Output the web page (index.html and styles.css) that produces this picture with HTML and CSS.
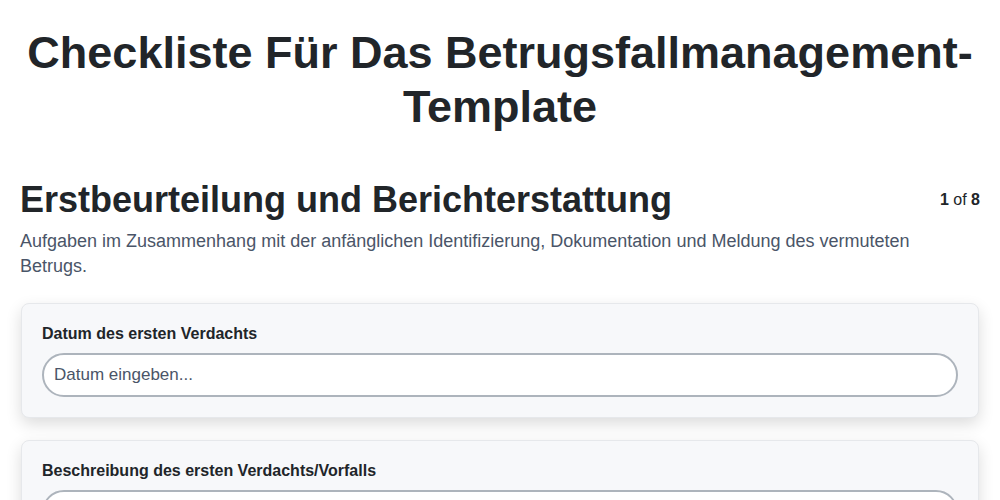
FILE: index.html
```html
<!DOCTYPE html>
<html lang="de">
<head>
<meta charset="utf-8">
<title>Checkliste Für Das Betrugsfallmanagement-Template</title>
<link rel="stylesheet" href="styles.css">
</head>
<body>
<main class="page">
  <h1 class="title">Checkliste Für Das Betrugsfallmanagement-Template</h1>
  <section class="section">
    <div class="section-head">
      <h2 class="section-title">Erstbeurteilung und Berichterstattung</h2>
      <div class="counter"><b>1</b> of <b>8</b></div>
    </div>
    <p class="section-desc">Aufgaben im Zusammenhang mit der anfänglichen Identifizierung, Dokumentation und Meldung des vermuteten Betrugs.</p>
    <div class="card">
      <label class="field-label">Datum des ersten Verdachts</label>
      <input class="field-input" type="text" placeholder="Datum eingeben...">
    </div>
    <div class="card">
      <label class="field-label">Beschreibung des ersten Verdachts/Vorfalls</label>
      <input class="field-input" type="text" placeholder="Beschreibung eingeben...">
    </div>
  </section>
</main>
</body>
</html>
```
FILE: styles.css
```css
* { box-sizing: border-box; }
html, body { margin: 0; padding: 0; background: #ffffff; }
body {
  font-family: "Liberation Sans", Arial, sans-serif;
  color: #212529;
}
.page {
  padding: 26px 20px 20px;
}
.title {
  margin: 0;
  text-align: center;
  font-size: 45px;
  line-height: 54px;
  font-weight: 700;
  color: #212529;
}
.section {
  margin-top: 44px;
}
.section-head {
  display: flex;
  align-items: center;
  justify-content: space-between;
}
.section-title {
  margin: 0;
  font-size: 36px;
  line-height: 43px;
  font-weight: 700;
  color: #212529;
}
.counter {
  font-size: 16px;
  color: #212529;
}
.counter b { font-weight: 700; }
.section-desc {
  margin: 8px 0 24px;
  font-size: 18px;
  line-height: 25px;
  color: #4a5568;
}
.card {
  display: flex;
  flex-direction: column;
  margin: 0 1px 22px;
  padding: 20px 20px 20px;
  background: #f7f8fa;
  border: 1px solid #e6e8eb;
  border-radius: 8px;
  box-shadow: 0 6px 16px rgba(0, 0, 0, 0.14);
}
.field-label {
  font-size: 16px;
  line-height: 19px;
  font-weight: 700;
  color: #212529;
  margin-bottom: 10px;
}
.field-input {
  height: 44px;
  padding: 0 10px;
  border: 2px solid #adb4bc;
  border-radius: 22px;
  background: #ffffff;
  font-family: "Liberation Sans", Arial, sans-serif;
  font-size: 17px;
  color: #212529;
  outline: none;
}
.field-input::placeholder { color: #4a5568; opacity: 1; }
```
